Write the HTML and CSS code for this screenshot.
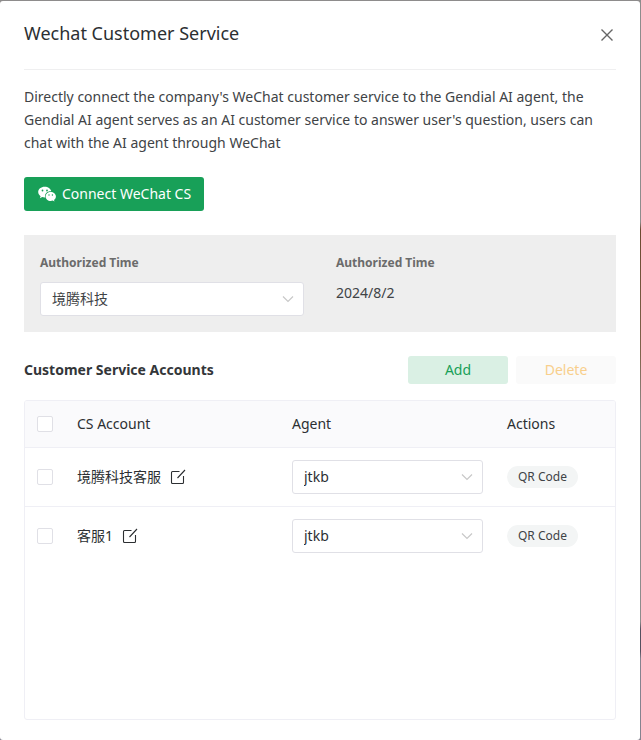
FILE: index.html
```html
<!DOCTYPE html>
<html lang="en">
<head>
<meta charset="utf-8">
<title>Wechat Customer Service</title>
<meta name="viewport" content="width=device-width, initial-scale=1">
<link rel="stylesheet" href="styles.css">
</head>
<body>
<svg class="sprite" aria-hidden="true">
  <symbol id="chevron" viewBox="0 0 16 16"><path d="M3 5.5l5 5 5-5" fill="none" stroke="currentColor" stroke-width="1.2"/></symbol>
  <symbol id="edit" viewBox="0 0 16 16"><path d="M9.500 2.500H2.500q-1 0-1 1v10q0 1 1 1h10q1 0 1-1V7M7.500 9L15 1" fill="none" stroke="currentColor" stroke-width="1.1"/></symbol>
</svg>
<main class="modal" role="dialog" aria-labelledby="title">
  <header class="modal-header">
    <h1 class="modal-title" id="title">Wechat Customer Service</h1>
    <button class="icon-button close" type="button" aria-label="Close">
      <svg class="close-icon" viewBox="0 0 14 14"><path d="M1.500 1.500l11 11M12.500 1.500l-11 11" fill="none" stroke="currentColor" stroke-width="1.400"/></svg>
    </button>
  </header>
  <p class="intro">Directly connect the company's WeChat customer service to the Gendial AI agent, the Gendial AI agent serves as an AI customer service to answer user's question, users can chat with the AI agent through WeChat</p>
  <button class="connect" type="button">
    <svg class="wechat-icon" viewBox="0 0 18 16">
      <path fill="#fff" d="M6.700.8C3 .8.200 3.100.200 6.100c0 1.700.9 3.200 2.400 4.200l-.7 2 2.300-1.200c.8.200 1.600.4 2.500.4h.5C6.200 8 9 5.300 12.900 5.300h.4C12.700 2.700 10 .8 6.700.8z"/>
      <path fill="#fff" d="M17.900 10.400c0-2.500-2.400-4.400-5.200-4.400s-5.100 1.900-5.100 4.400 2.300 4.500 5.100 4.500c.7 0 1.400-.1 2-.3l1.800 1-.5-1.600c1.200-.9 1.900-2.200 1.900-3.600z"/>
      <g fill="#18a058"><circle cx="4.500" cy="4.500" r=".9"/><circle cx="9" cy="4.500" r=".9"/><circle cx="11" cy="9" r=".7"/><circle cx="14.400" cy="9" r=".7"/></g>
    </svg>
    <span>Connect WeChat CS</span>
  </button>
  <section class="info">
    <div>
      <label class="info-label" for="company">Authorized Time</label>
      <div class="select">
        <select id="company"><option>境腾科技</option></select>
        <svg class="chevron"><use href="#chevron"/></svg>
      </div>
    </div>
    <div>
      <div class="info-label">Authorized Time</div>
      <div class="info-value">2024/8/2</div>
    </div>
  </section>
  <div class="toolbar">
    <h2 class="section-title">Customer Service Accounts</h2>
    <button class="action add" type="button">Add</button>
    <button class="action delete" type="button" disabled>Delete</button>
  </div>
  <div class="table-box">
    <table>
      <colgroup><col class="col-check"><col class="col-wide"><col class="col-wide"><col></colgroup>
      <thead>
        <tr>
          <th class="check"><input type="checkbox" aria-label="Select all"></th>
          <th>CS Account</th><th>Agent</th><th>Actions</th>
        </tr>
      </thead>
      <tbody>
        <tr>
          <td class="check"><input type="checkbox" aria-label="Select 境腾科技客服"></td>
          <td><div class="account"><span>境腾科技客服</span><button class="icon-button" type="button" aria-label="Edit"><svg class="edit-icon"><use href="#edit"/></svg></button></div></td>
          <td><div class="select"><select aria-label="Agent"><option>jtkb</option></select><svg class="chevron"><use href="#chevron"/></svg></div></td>
          <td><button class="tag" type="button">QR Code</button></td>
        </tr>
        <tr>
          <td class="check"><input type="checkbox" aria-label="Select 客服1"></td>
          <td><div class="account"><span>客服1</span><button class="icon-button" type="button" aria-label="Edit"><svg class="edit-icon"><use href="#edit"/></svg></button></div></td>
          <td><div class="select"><select aria-label="Agent"><option>jtkb</option></select><svg class="chevron"><use href="#chevron"/></svg></div></td>
          <td><button class="tag" type="button">QR Code</button></td>
        </tr>
      </tbody>
    </table>
  </div>
</main>
</body>
</html>
```
FILE: styles.css
```css
* { box-sizing: border-box; }

body {
  margin: 0;
  padding: 1px 1px 0 0;
  min-height: 100vh;
  display: flex;
  background: linear-gradient(#8e8c8c 30%, #6b4a30 31%, #80644d 48%, #8e8c8c 56%, #8e8c8c 84%, #55505f 85%, #55505f 88%, #85838f 89%);
  color: #404346;
  font: 14px/22px "Noto Sans", "Noto Sans CJK SC", sans-serif;
}

button, select { font: inherit; color: inherit; }
button { border: 0; padding: 0; cursor: pointer; }
svg { display: block; }
.sprite { display: none; }

.modal {
  flex: 1;
  min-width: 0;
  display: flex;
  flex-direction: column;
  padding: 0 24px 20px;
  border-radius: 3px;
  background: #fff;
}

.modal-header {
  display: flex;
  align-items: center;
  justify-content: space-between;
  height: 69px;
  padding-bottom: 4px;
  border-bottom: 1px solid #efeff0;
}
.modal-title { margin: 0; font-size: 18px; font-weight: 400; line-height: 28px; color: #2c2f32; }
.icon-button { background: none; }
.close { padding: 4px 2px 0 0; }
.close-icon { width: 14px; height: 14px; color: #666; }

.intro { margin: 15px 0 23px; line-height: 23px; }

.connect {
  align-self: flex-start;
  display: flex;
  align-items: center;
  gap: 6px;
  min-width: 180px;
  height: 34px;
  padding: 0 8px 0 14px;
  border-radius: 3px;
  background: #18a058;
  color: #fff;
}
.wechat-icon { width: 18px; height: 16px; }

.info {
  display: grid;
  grid-template-columns: 1fr 1fr;
  gap: 32px;
  margin: 24px 0;
  padding: 16px;
  background: #eee;
}
.info-label { display: block; margin-bottom: 8px; font-size: 12px; line-height: 23px; font-weight: 700; color: #6b6b6b; }

.select { position: relative; }
.select select {
  display: block;
  width: 100%;
  height: 34px;
  padding: 0 34px 0 11px;
  border: 1px solid #e0e0e6;
  border-radius: 3px;
  background: #fff;
  appearance: none;
}
.chevron { position: absolute; right: 8px; top: 9px; width: 16px; height: 16px; color: #c8c8c8; pointer-events: none; }

.toolbar { display: flex; align-items: center; gap: 8px; margin-bottom: 16px; }
.section-title { flex: 1; margin: 0; font-size: 14px; font-weight: 700; line-height: 22px; color: #333639; }
.action { width: 100px; height: 28px; border-radius: 3px; }
.add { background: #daf0e4; color: #18a058; }
.delete { background: #fafafa; color: #f8cf8c; }

.table-box { flex: 1; border: 1px solid #efeff5; border-radius: 3px; overflow: hidden; }
table { width: 100%; table-layout: fixed; border-collapse: separate; border-spacing: 0; color: #2c2f32; }
.col-check { width: 40px; }
.col-wide { width: 215px; }
th, td { padding: 12px; text-align: left; font-weight: 400; }
th { background: #fafafc; border-bottom: 1px solid #efeff5; }
tbody tr:not(:last-child) td { border-bottom: 1px solid #efeff5; }
.check { padding-right: 0; }
input[type="checkbox"] {
  display: block;
  width: 16px;
  height: 16px;
  margin: 0;
  border: 1px solid #e0e0e6;
  border-radius: 2px;
  background: #fff;
  appearance: none;
}
.account { display: flex; align-items: center; gap: 9px; }
.edit-icon { width: 16px; height: 16px; }
.tag { display: block; height: 22px; padding: 0 11px; border-radius: 11px; background: #f3f5f5; color: #404346; font-size: 12px; }
```
